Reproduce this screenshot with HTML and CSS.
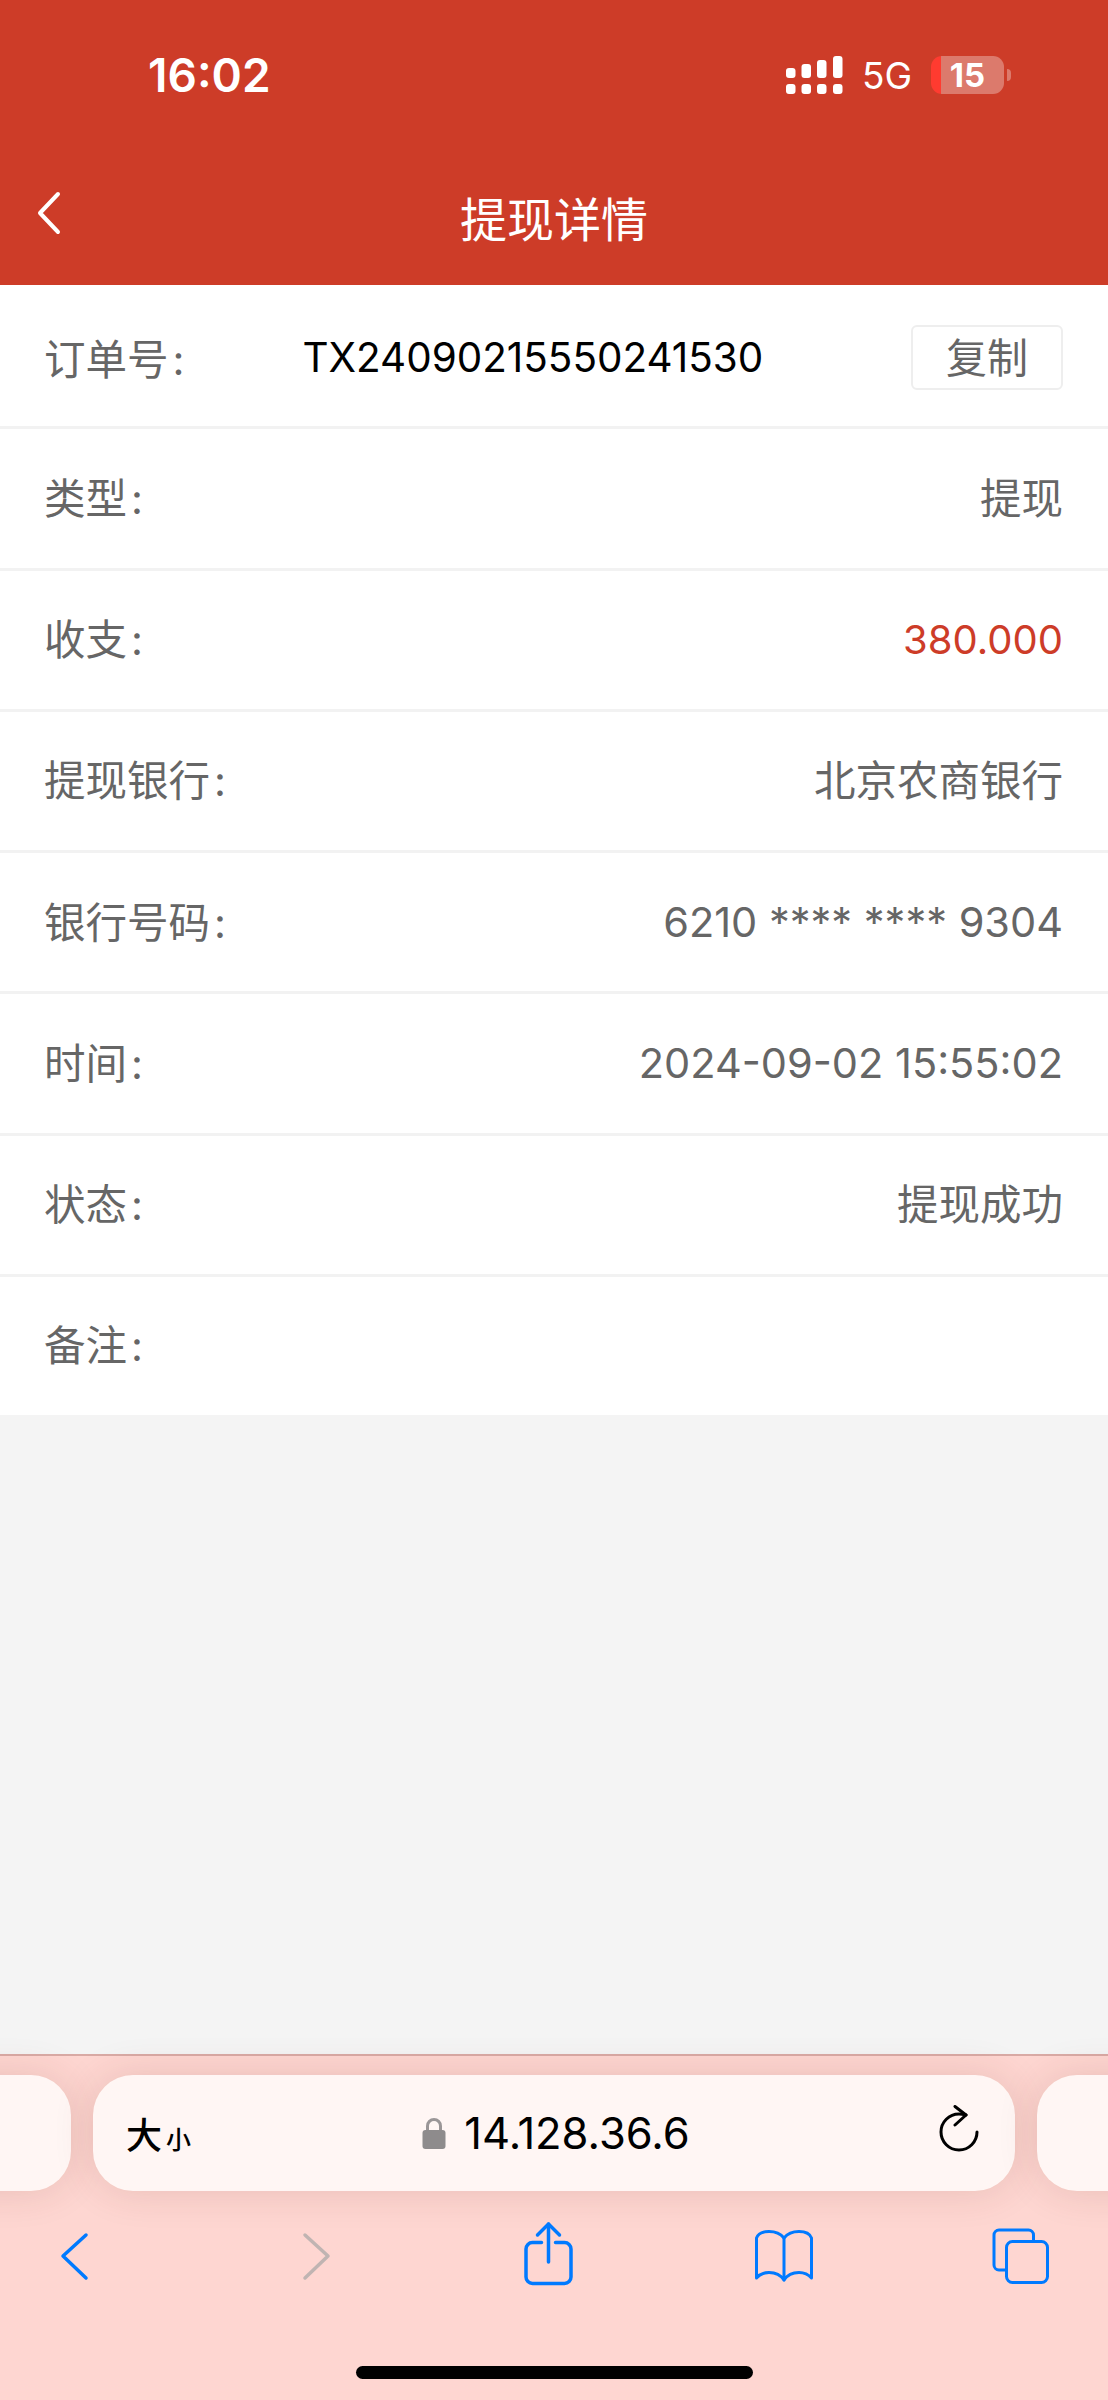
FILE: index.html
```html
<!DOCTYPE html>
<html lang="zh-CN">
<head>
    <meta charset="UTF-8">
    <meta name="viewport" content="width=device-width, initial-scale=1.0">
    <title>提现详情</title>
    <link rel="stylesheet" href="styles.css">
</head>
<body>
    <div class="page">
        <header class="header">
            <div class="status-bar">
                <span class="time">16:02</span>
                <div class="status-right">
                    <svg class="signal" width="57" height="38" viewBox="0 0 57 38" fill="#fff">
                        <rect x="0" y="12" width="9.5" height="10" rx="3"/>
                        <rect x="15.5" y="8" width="9.5" height="14" rx="3"/>
                        <rect x="31" y="4" width="9.5" height="18" rx="3"/>
                        <rect x="47" y="0" width="9.5" height="22" rx="3"/>
                        <rect x="0" y="28" width="9.5" height="10" rx="3"/>
                        <rect x="15.5" y="28" width="9.5" height="10" rx="3"/>
                        <rect x="31" y="28" width="9.5" height="10" rx="3"/>
                        <rect x="47" y="28" width="9.5" height="10" rx="3"/>
                    </svg>
                    <span class="network">5G</span>
                    <div class="battery">15</div>
                    <span class="battery-nub"></span>
                </div>
            </div>
            <div class="nav">
                <svg class="nav-back" width="26" height="44" viewBox="0 0 26 44" fill="none" stroke="#fff" stroke-width="4" stroke-linecap="round" stroke-linejoin="round">
                    <path d="M21 3 L3 22 L21 41"/>
                </svg>
                <h1>提现详情</h1>
            </div>
        </header>

        <main class="details">
            <div class="row">
                <span class="label">订单号<span class="colon">:</span></span>
                <span class="order-no">TX24090215550241530</span>
                <span class="copy">复制</span>
            </div>
            <div class="row">
                <span class="label">类型<span class="colon">:</span></span>
                <span class="value cjk">提现</span>
            </div>
            <div class="row">
                <span class="label">收支<span class="colon">:</span></span>
                <span class="value amount">380.000</span>
            </div>
            <div class="row">
                <span class="label">提现银行<span class="colon">:</span></span>
                <span class="value cjk">北京农商银行</span>
            </div>
            <div class="row">
                <span class="label">银行号码<span class="colon">:</span></span>
                <span class="value">6210 **** **** 9304</span>
            </div>
            <div class="row">
                <span class="label">时间<span class="colon">:</span></span>
                <span class="value">2024-09-02 15:55:02</span>
            </div>
            <div class="row">
                <span class="label">状态<span class="colon">:</span></span>
                <span class="value cjk">提现成功</span>
            </div>
            <div class="row">
                <span class="label">备注<span class="colon">:</span></span>
            </div>
        </main>

        <footer class="browser">
            <div class="tabs">
                <div class="pill"></div>
                <div class="pill pill-main">
                    <div class="text-size"><span class="big">大</span><span class="small">小</span></div>
                    <div class="address">
                        <svg width="24" height="32" viewBox="0 0 24 32">
                            <path d="M5.5 14 V9 a6.5 6.5 0 0 1 13 0 V14" fill="none" stroke="#9a9697" stroke-width="3"/>
                            <rect x="0.5" y="13" width="23" height="19" rx="3" fill="#8e8b8c"/>
                        </svg>
                        <span class="url">14.128.36.6</span>
                    </div>
                    <svg class="reload" width="40" height="48" viewBox="0 0 40 48" fill="none" stroke="#000" stroke-width="3" stroke-linecap="round" stroke-linejoin="round">
                        <path d="M16 1.5 L27 10 L16 20"/>
                        <path d="M27 10 C24 9.300 22 9 20 9 A18 18 0 1 0 38 27"/>
                    </svg>
                </div>
                <div class="pill"></div>
            </div>
            <div class="toolbar">
                <svg width="60" height="70" viewBox="0 0 60 70" fill="none" stroke="#007aff" stroke-width="3.5" stroke-linecap="round" stroke-linejoin="round">
                    <path d="M42 15 L19 36 L42 58"/>
                </svg>
                <svg width="60" height="70" viewBox="0 0 60 70" fill="none" stroke="#c0b4b2" stroke-width="3.5" stroke-linecap="round" stroke-linejoin="round">
                    <path d="M24 15 L47 36 L24 58"/>
                </svg>
                <svg width="60" height="70" viewBox="0 0 60 70" fill="none" stroke="#007aff" stroke-width="3.5" stroke-linecap="round" stroke-linejoin="round">
                    <g transform="translate(1.5 0)">
                        <path d="M23 22.500 H14 a6.500 6.500 0 0 0 -6.500 6.500 V57 a6.500 6.500 0 0 0 6.500 6.500 H46 a6.500 6.500 0 0 0 6.500 -6.500 V29 a6.500 6.500 0 0 0 -6.500 -6.500 H37"/>
                        <path d="M30 42 V4"/>
                        <path d="M19 15 L30 4 L41 15"/>
                    </g>
                </svg>
                <svg width="60" height="70" viewBox="0 0 60 70" fill="none" stroke="#007aff" stroke-width="3" stroke-linecap="round" stroke-linejoin="round">
                    <path d="M30 18 C26 13 20 11.500 15 11.500 C9 11.500 4 14 2.500 18 V58 C6 54 10 52.500 15 52.500 C20 52.500 26 54 30 60 C34 54 40 52.500 45 52.500 C50 52.500 54 54 57.500 58 V18 C56 14 51 11.500 45 11.500 C40 11.500 34 13 30 18 Z"/>
                    <path d="M30 18 V60"/>
                </svg>
                <svg width="60" height="70" viewBox="0 0 60 70" fill="none" stroke="#007aff" stroke-width="3" stroke-linecap="round" stroke-linejoin="round">
                    <path d="M43.500 20 V15 a5 5 0 0 0 -5 -5 H9 a5 5 0 0 0 -5 5 V45 a5 5 0 0 0 5 5 H16"/>
                    <rect x="16.500" y="21.500" width="41" height="41" rx="6"/>
                </svg>
            </div>
            <div class="home-bar"><span class="home-indicator"></span></div>
        </footer>
    </div>
</body>
</html>
```
FILE: styles.css
```css
* {
    box-sizing: border-box;
}
body {
    margin: 0;
    font-family: Inter, "Noto Sans CJK SC", sans-serif;
    background-color: #f4f4f4;
}
.page {
    display: flex;
    flex-direction: column;
    width: 1108px;
    height: 2400px;
    overflow: hidden;
}

/* top red area */
.header {
    height: 285px;
    background-color: #cd3c28;
    color: #fff;
}
.status-bar {
    display: flex;
    align-items: center;
    justify-content: space-between;
    height: 150px;
    padding: 0 97px 0 148px;
}
.time {
    font-size: 46px;
    font-weight: 600;
}
.status-right {
    display: flex;
    align-items: center;
}
.network {
    margin: 0 19px;
    font-size: 37px;
}
.battery {
    width: 73px;
    height: 38px;
    border-radius: 11px;
    background: linear-gradient(90deg, #ff3b30 10px, #dc7a6c 10px);
    font-size: 33px;
    font-weight: 700;
    line-height: 38px;
    text-align: center;
}
.battery-nub {
    width: 4px;
    height: 12px;
    margin-left: 3px;
    border-radius: 0 4px 4px 0;
    background-color: #dc7a6c;
}
.nav {
    display: grid;
    grid-template-columns: 1fr auto 1fr;
    align-items: center;
    height: 135px;
    padding: 0 37px;
}
.nav-back {
    margin-bottom: 10px;
}
.nav h1 {
    margin: 0 0 3px;
    font-size: 47px;
    font-weight: 400;
}

/* rows */
.details {
    flex: 1;
}
.row {
    display: flex;
    align-items: center;
    justify-content: space-between;
    height: 141.25px;
    padding: 0 45px 0 44px;
    background-color: #fff;
    border-top: 3px solid #f2f2f2;
    font-size: 41.5px;
    color: #666;
}
.row:first-child {
    border-top-color: #fff;
}
.label,
.cjk {
    margin-bottom: 5px;
}
.row:first-child .label {
    margin-bottom: 0;
}
.colon {
    margin-left: 4px;
}
.order-no {
    margin: 0 auto 0 118px;
    font-size: 40.4px;
    color: #000;
}
.copy {
    display: flex;
    align-items: center;
    justify-content: center;
    width: 152px;
    height: 65px;
    padding-bottom: 4px;
    border: 2px solid #eee;
    border-radius: 6px;
    font-size: 41px;
}
.amount {
    font-size: 40px;
    color: #cd3c28;
}

/* browser toolbar */
.browser {
    height: 346px;
    background-color: #fed6d1;
    border-top: 2px solid #d9aaa5;
}
.tabs {
    display: flex;
    justify-content: center;
    gap: 22px;
    padding-top: 19px;
}
.pill {
    flex-shrink: 0;
    width: 922px;
    height: 116px;
    border-radius: 40px;
    background-color: #fff6f4;
    box-shadow: 0 0 40px rgba(100, 40, 30, 0.14);
}
.pill-main {
    display: grid;
    grid-template-columns: 1fr auto 1fr;
    align-items: center;
    padding: 0 36px 0 33px;
}
.text-size {
    display: flex;
    align-items: baseline;
    color: #000;
    font-weight: 500;
}
.big {
    font-size: 36px;
    margin-right: 4px;
}
.small {
    font-size: 25px;
}
.address {
    display: flex;
    align-items: center;
    gap: 18px;
    margin-left: 7px;
}
.url {
    font-size: 43.5px;
    color: #000;
}
.reload {
    justify-self: end;
    margin-bottom: 8px;
}
.toolbar {
    display: flex;
    justify-content: space-between;
    padding: 29px 58px 0 44px;
}
.home-bar {
    display: flex;
    justify-content: center;
    padding-top: 76px;
}
.home-indicator {
    width: 397px;
    height: 13px;
    border-radius: 7px;
    background-color: #000;
}
```
